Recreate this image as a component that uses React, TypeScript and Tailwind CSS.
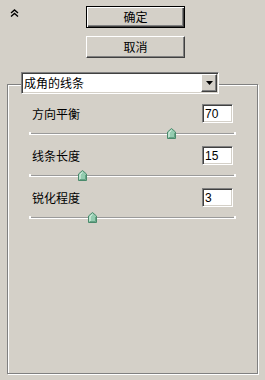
import { useState } from "react";

// ─── Classic 3D borders ─────────────────────────────────────────────────────

const raised =
    "border border-t-white border-l-white border-r-[#404040] border-b-[#404040] shadow-[inset_-1px_-1px_0_#808080]";
const raisedDefault =
    "border border-black shadow-[inset_1px_1px_0_#fff,inset_-1px_-1px_0_#404040,inset_-2px_-2px_0_#808080]";
const sunken =
    "border border-t-[#808080] border-l-[#808080] border-r-white border-b-white shadow-[inset_1px_1px_0_#404040,inset_-1px_-1px_0_#d4d0c8]";

const font = "font-['Noto_Sans_CJK_SC','DejaVu_Sans',sans-serif]";

// ─── Pieces ─────────────────────────────────────────────────────────────────

function Chevrons() {
    return (
        <svg width="9" height="8" viewBox="0 0 9 8" className="block">
            <path d="M1 4 L4.5 1 L8 4" fill="none" stroke="#000" strokeWidth="1.4" />
            <path d="M1 7.5 L4.5 4.5 L8 7.5" fill="none" stroke="#000" strokeWidth="1.4" />
        </svg>
    );
}

function Thumb() {
    return (
        <svg width="9" height="11" viewBox="0 0 9 11" className="block">
            <polygon points="4.5,0.5 8.5,4 8.5,10.5 0.5,10.5 0.5,4" fill="#94ccb0" stroke="#4a8a6c" strokeWidth="1" />
            <path d="M2 4.5 L4.5 2.3 M2 4.5 L2 9" stroke="#e8f6ee" strokeWidth="1" />
            <path d="M2 9.5 L7.5 9.5 L7.5 5" stroke="#64a284" strokeWidth="1" fill="none" />
        </svg>
    );
}

function Slider({ pos }: { pos: number }) {
    return (
        <div className="relative h-[12px] -mx-[3px]">
            <div className="absolute left-0 right-0 top-[5px] h-[2px] border-t border-t-[#9a9a9a] border-b border-b-white" />
            <div className="absolute left-0 top-[4px] w-[2px] h-[3px] bg-white" />
            <div className="absolute right-0 top-[4px] w-[2px] h-[3px] bg-white" />
            <div className="absolute top-0" style={{ left: pos - 4 }}>
                <Thumb />
            </div>
        </div>
    );
}

function ParamRow({ label, value, pos }: { label: string; value: string; pos: number }) {
    return (
        <div className="flex flex-col">
            <div className="flex items-center justify-between h-[19px]">
                <span className="text-[12px] leading-none text-black">{label}</span>
                <div className={`w-[31px] h-[19px] bg-white ${sunken} flex items-center pl-[2px]`}>
                    <span className="text-[12px] leading-none text-black font-['Liberation_Sans',sans-serif]">{value}</span>
                </div>
            </div>
            <div className="mt-[5px]">
                <Slider pos={pos} />
            </div>
        </div>
    );
}

// ─── Main ───────────────────────────────────────────────────────────────────

export default function App() {
    const [mode] = useState("成角的线条");

    return (
        <div className={`w-[265px] h-[380px] bg-[#d4d0c8] ${font} overflow-hidden`}>
            {/* Top: collapse + buttons */}
            <div className="flex pt-[6px]">
                <div className="w-[86px] pl-[10px] pt-[3px]">
                    <Chevrons />
                </div>
                <div className="flex flex-col gap-[8px]">
                    <button className={`w-[99px] h-[22px] ${raisedDefault} flex items-center justify-center text-[12px] leading-none text-black`}>
                        确定
                    </button>
                    <button className={`w-[99px] h-[22px] ${raised} flex items-center justify-center text-[12px] leading-none text-black`}>
                        取消
                    </button>
                </div>
            </div>

            {/* Group box */}
            <div className="mt-[26px] ml-[7px] w-[251px] h-[290px] border border-[#808080] shadow-[1px_1px_0_#fff,inset_1px_1px_0_#fff]">
                <div className={`-mt-[13px] ml-[13px] w-[198px] h-[22px] bg-white ${sunken} flex items-center justify-between`}>
                    <span className="pl-[2px] text-[12px] leading-none text-black">{mode}</span>
                    <div className={`w-[16px] h-[18px] mr-[1px] bg-[#d4d0c8] ${raised} flex items-center justify-center`}>
                        <svg width="7" height="4" viewBox="0 0 7 4" className="block">
                            <polygon points="0,0 7,0 3.5,4" fill="#000" />
                        </svg>
                    </div>
                </div>

                <div className="flex flex-col gap-[6px] px-[24px] mt-[10px]">
                    <ParamRow label="方向平衡" value="70" pos={142} />
                    <ParamRow label="线条长度" value="15" pos={53} />
                    <ParamRow label="锐化程度" value="3" pos={63} />
                </div>
            </div>
        </div>
    );
}
